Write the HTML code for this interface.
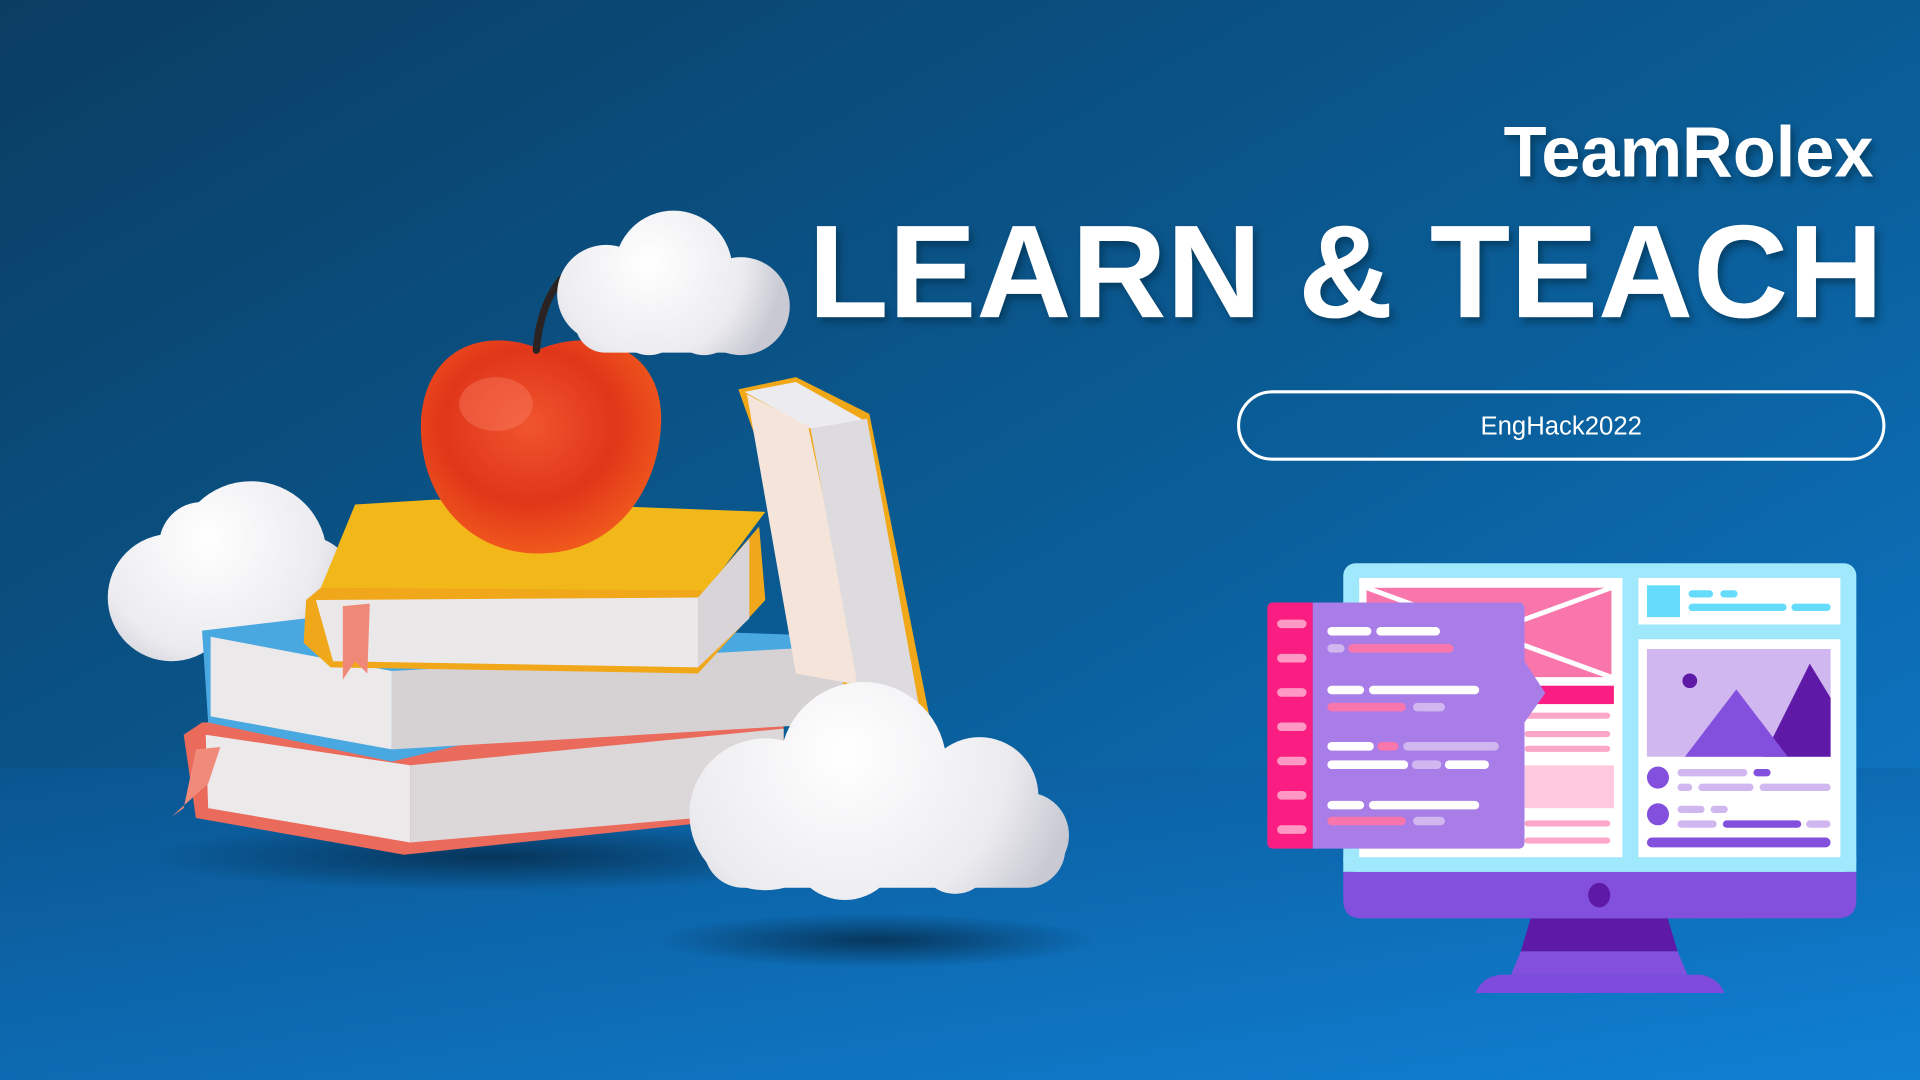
<!DOCTYPE html>
<html><head><meta charset="utf-8"><style>
html,body{margin:0;padding:0;width:1920px;height:1080px;overflow:hidden;background:#0b5a93}
svg{display:block}
</style></head><body>
<svg width="1920" height="1080" viewBox="0 0 1568 882" preserveAspectRatio="none" xmlns="http://www.w3.org/2000/svg">
<defs>
<linearGradient id="bg" x1="0" y1="0" x2="1" y2="1">
<stop offset="0" stop-color="#0a3d62"/><stop offset="0.55" stop-color="#0a5e99"/><stop offset="1" stop-color="#0f7bcf"/>
</linearGradient>
<linearGradient id="fl" x1="0" y1="0" x2="1" y2="1">
<stop offset="0" stop-color="#0a5590"/><stop offset="1" stop-color="#1080d4"/>
</linearGradient>
<radialGradient id="c1" gradientUnits="userSpaceOnUse" cx="170" cy="440" r="130">
<stop offset="0" stop-color="#ffffff"/><stop offset="0.7" stop-color="#ececf0"/><stop offset="1" stop-color="#c8c9d2"/>
</radialGradient>
<radialGradient id="c2" gradientUnits="userSpaceOnUse" cx="530" cy="215" r="110">
<stop offset="0" stop-color="#ffffff"/><stop offset="0.7" stop-color="#ececf0"/><stop offset="1" stop-color="#c8c9d2"/>
</radialGradient>
<radialGradient id="c3" gradientUnits="userSpaceOnUse" cx="690" cy="615" r="190">
<stop offset="0" stop-color="#ffffff"/><stop offset="0.7" stop-color="#ececf0"/><stop offset="1" stop-color="#c8c9d2"/>
</radialGradient>
<radialGradient id="ap" cx="0.45" cy="0.4" r="0.6">
<stop offset="0" stop-color="#f0552e"/><stop offset="0.6" stop-color="#e0361a"/><stop offset="1" stop-color="#f0581c"/>
</radialGradient>
<radialGradient id="sh" cx="0.5" cy="0.5" r="0.5">
<stop offset="0" stop-color="#052a48" stop-opacity="0.8"/><stop offset="1" stop-color="#052a48" stop-opacity="0"/>
</radialGradient>
<filter id="ts"><feDropShadow dx="3" dy="4" stdDeviation="3" flood-color="#042c4a" flood-opacity="0.6"/></filter>
</defs>
<rect width="1568" height="882" fill="url(#bg)"/>
<rect y="627" width="1568" height="255" fill="url(#fl)"/>

<ellipse cx="715" cy="768" rx="180" ry="22" fill="url(#sh)"/>
<ellipse cx="400" cy="700" rx="280" ry="28" fill="url(#sh)"/>

<g fill="url(#c1)">
<circle cx="140" cy="488" r="52"/><circle cx="205" cy="455" r="62"/><circle cx="250" cy="478" r="40"/><circle cx="165" cy="445" r="35"/><rect x="100" y="470" width="170" height="55" rx="27"/>
</g>

<path d="M150 600 L165 590 L640 578 L640 665 L330 698 L160 668 Z" fill="#ea6a5c"/>
<path d="M168 600 L335 625 L335 688 L170 660 Z" fill="#ece9ea"/>
<path d="M335 625 L640 595 L640 662 L335 688 Z" fill="#dcd7d8"/>
<path d="M150 660 L160 612 L180 610 L170 640 L140 667 Z" fill="#f08a7a"/>

<path d="M165 515 L250 505 L700 520 L700 530 L320 622 L170 590 Z" fill="#4aa8e0"/>
<path d="M172 520 L320 548 L320 612 L172 585 Z" fill="#ebe9ea"/>
<path d="M320 548 L695 527 L695 590 L320 612 Z" fill="#d6d2d4"/>

<path d="M603 318 L650 308 L710 338 L760 590 L700 590 Z" fill="#f0a818"/>
<path d="M608 320 L650 312 L705 343 L662 350 Z" fill="#ececf0"/>
<path d="M610 322 L660 348 L705 560 L650 550 Z" fill="#f4e4da"/>
<path d="M662 350 L708 342 L752 585 L705 585 Z" fill="#dedbde"/>

<path d="M290 412 L355 408 L625 418 L575 485 L260 485 Z" fill="#f2b81a"/>
<path d="M250 490 L262 480 L575 482 L620 430 L625 490 L570 550 L270 545 L248 525 Z" fill="#f0a81a"/>
<path d="M258 490 L570 488 L570 545 L272 540 Z" fill="#ebe8ea"/>
<path d="M570 488 L612 440 L612 505 L570 545 Z" fill="#d8d4d8"/>
<path d="M280 495 L302 493 L300 550 L290 540 L280 555 Z" fill="#f08878"/>

<path d="M441 285 C400 268 350 280 344 340 C340 400 378 452 440 452 C502 452 540 400 540 340 C538 280 482 268 441 285 Z" fill="url(#ap)"/>
<ellipse cx="405" cy="330" rx="30" ry="22" fill="#ff8a70" opacity="0.35"/>
<path d="M438 286 C440 260 448 238 462 224" stroke="#2b2322" stroke-width="6" fill="none" stroke-linecap="round"/>

<g fill="url(#c2)">
<circle cx="495" cy="240" r="40"/><circle cx="550" cy="220" r="48"/><circle cx="605" cy="250" r="40"/><circle cx="530" cy="262" r="28"/><circle cx="575" cy="262" r="28"/><rect x="470" y="240" width="165" height="48" rx="24"/>
</g>

<g fill="url(#c3)">
<circle cx="625" cy="665" r="62"/><circle cx="705" cy="625" r="68"/><circle cx="690" cy="690" r="45"/>
<circle cx="745" cy="670" r="52"/><circle cx="800" cy="650" r="48"/><circle cx="838" cy="682" r="35"/><circle cx="780" cy="700" r="30"/><rect x="575" y="660" width="295" height="65" rx="32"/>
</g>

<g fill="#ffffff" font-family="'Liberation Sans', 'DejaVu Sans', sans-serif" font-weight="700" filter="url(#ts)">
<text x="1530" y="144" font-size="58" text-anchor="end" textLength="302" lengthAdjust="spacingAndGlyphs">TeamRolex</text>
<text x="660" y="259" font-size="108" textLength="878" lengthAdjust="spacingAndGlyphs">LEARN &amp; TEACH</text>
</g>
<rect x="1011.5" y="320" width="527" height="55" rx="27.5" fill="none" stroke="#ffffff" stroke-width="2.5"/>
<text x="1275" y="355" font-size="21" fill="#ffffff" text-anchor="middle" font-family="'Liberation Sans', sans-serif">EngHack2022</text>

<path d="M1250 750 L1362 750 L1370 777 L1242 777 Z" fill="#5e19a6"/>
<path d="M1242 777 L1370 777 L1378 796 L1234 796 Z" fill="#8250dc"/>
<path d="M1225 796 L1390 796 Q1405 800 1408 811 L1205 811 Q1210 798 1225 796 Z" fill="#7e4bdc"/>
<path d="M1097 712 L1516 712 L1516 735 Q1516 750 1500 750 L1112 750 Q1097 750 1097 735 Z" fill="#8250dc"/>
<ellipse cx="1306" cy="731" rx="9" ry="10" fill="#5e19a6"/>
<rect x="1097" y="460" width="419" height="252" rx="10" fill="#a0e8fc"/>
<rect x="1097" y="700" width="419" height="12" fill="#a0e8fc"/>
<rect x="1110" y="472" width="215" height="228" fill="#ffffff"/>
<rect x="1338" y="472" width="165" height="38" fill="#ffffff"/>
<rect x="1338" y="522" width="165" height="178" fill="#ffffff"/>
<rect x="1116" y="480" width="200" height="73" fill="#f876ac"/>
<path d="M1116 480 L1316 553 M1316 480 L1116 553" stroke="#ffffff" stroke-width="4"/>
<rect x="1240" y="560" width="78" height="15" fill="#fa1e82"/>
<g fill="#fca6c8">
<rect x="1245" y="582" width="70" height="5" rx="2.5"/><rect x="1245" y="597" width="70" height="5" rx="2.5"/><rect x="1245" y="609" width="70" height="5" rx="2.5"/>
<rect x="1245" y="670" width="70" height="5" rx="2.5"/><rect x="1245" y="684" width="70" height="5" rx="2.5"/>
</g>
<rect x="1245" y="625" width="73" height="35" fill="#ffc8de"/>
<rect x="1345" y="478" width="27" height="26" fill="#66dcfc"/>
<g fill="#66dcfc"><rect x="1379" y="482" width="20" height="6" rx="3"/><rect x="1405" y="482" width="14" height="6" rx="3"/><rect x="1379" y="493" width="80" height="6" rx="3"/><rect x="1463" y="493" width="32" height="6" rx="3"/></g>
<rect x="1345" y="530" width="150" height="88" fill="#d1b7ef"/>
<path d="M1440 618 L1478 542 L1495 570 L1495 618 Z" fill="#5e19a6"/>
<path d="M1376 618 L1418 563 L1460 618 Z" fill="#8250dc"/>
<circle cx="1380" cy="556" r="6" fill="#5e19a6"/>
<circle cx="1354" cy="635" r="9" fill="#8250dc"/><circle cx="1354" cy="665" r="9" fill="#8250dc"/>
<g fill="#d1b7ef"><rect x="1370" y="628" width="57" height="6" rx="3"/><rect x="1370" y="640" width="12" height="6" rx="3"/><rect x="1387" y="640" width="45" height="6" rx="3"/><rect x="1437" y="640" width="58" height="6" rx="3"/><rect x="1370" y="658" width="22" height="6" rx="3"/><rect x="1397" y="658" width="14" height="6" rx="3"/><rect x="1370" y="670" width="32" height="6" rx="3"/><rect x="1475" y="670" width="20" height="6" rx="3"/></g>
<g fill="#8250dc"><rect x="1432" y="628" width="14" height="6" rx="3"/><rect x="1407" y="670" width="64" height="6" rx="3"/><rect x="1345" y="684" width="150" height="8" rx="4"/></g>
<path d="M1072 492 L1240 492 Q1245 492 1245 497 L1245 540 L1262 566 L1245 590 L1245 688 Q1245 693 1240 693 L1072 693 Z" fill="#a87de8"/>
<path d="M1040 492 L1072 492 L1072 693 L1040 693 Q1035 693 1035 688 L1035 497 Q1035 492 1040 492 Z" fill="#fa1e82"/>
<g fill="#ff99c4"><rect x="1043" y="506" width="24" height="7" rx="3.5"/><rect x="1043" y="534" width="24" height="7" rx="3.5"/><rect x="1043" y="562" width="24" height="7" rx="3.5"/><rect x="1043" y="590" width="24" height="7" rx="3.5"/><rect x="1043" y="618" width="24" height="7" rx="3.5"/><rect x="1043" y="646" width="24" height="7" rx="3.5"/><rect x="1043" y="674" width="24" height="7" rx="3.5"/></g>
<g fill="#ffffff"><rect x="1084" y="512" width="36" height="7" rx="3.5"/><rect x="1124" y="512" width="52" height="7" rx="3.5"/><rect x="1084" y="560" width="30" height="7" rx="3.5"/><rect x="1118" y="560" width="90" height="7" rx="3.5"/><rect x="1084" y="606" width="38" height="7" rx="3.5"/><rect x="1084" y="621" width="66" height="7" rx="3.5"/><rect x="1180" y="621" width="36" height="7" rx="3.5"/><rect x="1084" y="654" width="30" height="7" rx="3.5"/><rect x="1118" y="654" width="90" height="7" rx="3.5"/></g>
<g fill="#f876ac"><rect x="1101" y="526" width="86" height="7" rx="3.5"/><rect x="1084" y="574" width="64" height="7" rx="3.5"/><rect x="1125" y="606" width="17" height="7" rx="3.5"/><rect x="1084" y="667" width="64" height="7" rx="3.5"/></g>
<g fill="#d1b7ef"><rect x="1084" y="526" width="14" height="7" rx="3.5"/><rect x="1154" y="574" width="26" height="7" rx="3.5"/><rect x="1146" y="606" width="78" height="7" rx="3.5"/><rect x="1153" y="621" width="24" height="7" rx="3.5"/><rect x="1154" y="667" width="26" height="7" rx="3.5"/></g>
</svg>
</body></html>
